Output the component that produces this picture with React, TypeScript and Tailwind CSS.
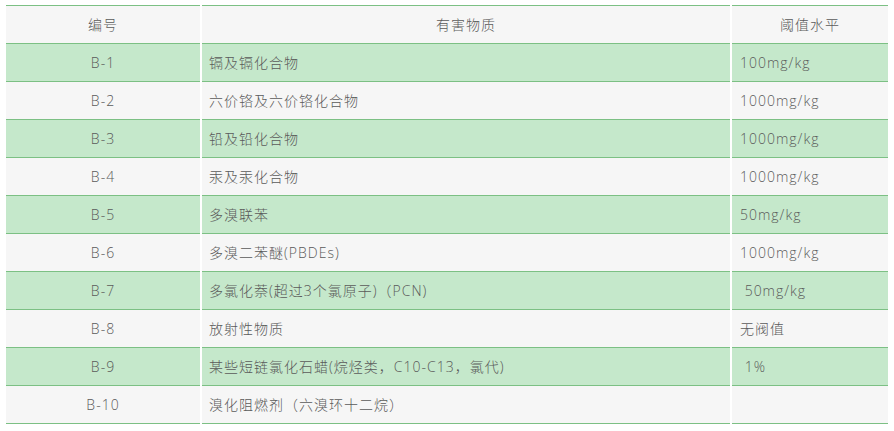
import React from 'react';

const rows = [
    { id: 'B-1', name: '镉及镉化合物', limit: '100mg/kg' },
    { id: 'B-2', name: '六价铬及六价铬化合物', limit: '1000mg/kg' },
    { id: 'B-3', name: '铅及铅化合物', limit: '1000mg/kg' },
    { id: 'B-4', name: '汞及汞化合物', limit: '1000mg/kg' },
    { id: 'B-5', name: '多溴联苯', limit: '50mg/kg' },
    { id: 'B-6', name: '多溴二苯醚(PBDEs)', limit: '1000mg/kg' },
    { id: 'B-7', name: '多氯化萘(超过3个氯原子)（PCN)', limit: '\u00a050mg/kg' },
    { id: 'B-8', name: '放射性物质', limit: '无阀值' },
    { id: 'B-9', name: '某些短链氯化石蜡(烷烃类，C10-C13，氯代)', limit: '\u00a01%' },
    { id: 'B-10', name: '溴化阻燃剂（六溴环十二烷）', limit: '' },
];

const App = () => {
    return (
        <div className="w-[894px] h-[431px] bg-white pt-[5px] pl-[6px]">
            <table
                className="w-[882px] table-fixed border-collapse border-t border-[#7cc084] text-[14px] text-[#5a5a5a] font-light tracking-[1px]"
                style={{ fontFamily: '"Open Sans", "Noto Sans CJK SC", sans-serif' }}
            >
                <colgroup>
                    <col className="w-[195px]" />
                    <col className="w-[530px]" />
                    <col className="w-[157px]" />
                </colgroup>
                <thead>
                    <tr className="h-[38px] bg-[#f6f6f6]">
                        <th className="font-light text-center border-b border-b-[#7cc084] border-r-2 border-r-white">编号</th>
                        <th className="font-light text-center border-b border-b-[#7cc084] border-r-2 border-r-white">有害物质</th>
                        <th className="font-light text-center border-b border-b-[#7cc084]">阈值水平</th>
                    </tr>
                </thead>
                <tbody>
                    {rows.map((row, index) => (
                        <tr
                            key={row.id}
                            className={`h-[38px] ${index % 2 === 0 ? 'bg-[#c5e8cb]' : 'bg-[#f6f6f6]'}`}
                        >
                            <td className="text-center border-b border-b-[#7cc084] border-r-2 border-r-white">{row.id}</td>
                            <td className="pl-[7px] border-b border-b-[#7cc084] border-r-2 border-r-white">{row.name}</td>
                            <td className="pl-[8px] border-b border-b-[#7cc084]">{row.limit}</td>
                        </tr>
                    ))}
                </tbody>
            </table>
        </div>
    );
};

export default App;
